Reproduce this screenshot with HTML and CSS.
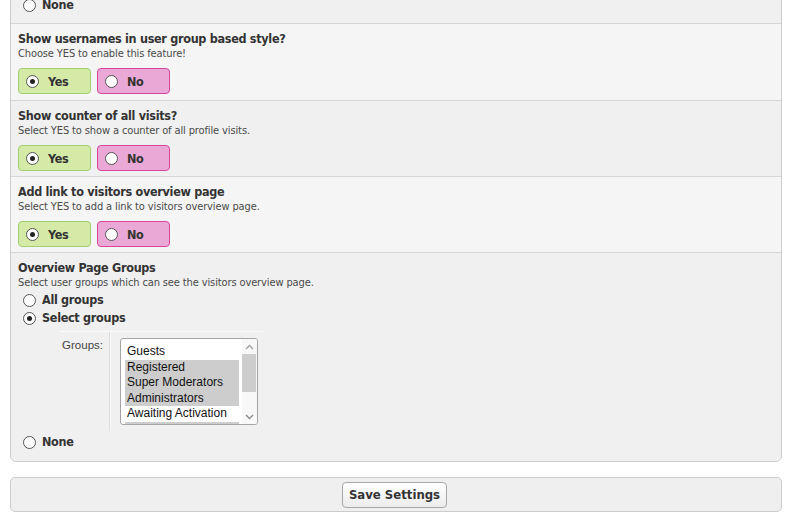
FILE: index.html
```html
<!DOCTYPE html>
<html>
<head>
<meta charset="utf-8">
<link rel="stylesheet" href="styles.css">
</head>
<body>
<div class="page">
  <div class="panel">
    <div class="row row-dark first">
      <label class="opt"><span class="radio"></span><span class="opt-text">None</span></label>
    </div>
    <div class="row row-light tall">
      <div class="title">Show usernames in user group based style?</div>
      <div class="desc">Choose YES to enable this feature!</div>
      <div class="yesno">
        <span class="yn yes"><span class="radio checked"></span>Yes</span>
        <span class="yn no"><span class="radio"></span>No</span>
      </div>
    </div>
    <div class="row row-dark">
      <div class="title">Show counter of all visits?</div>
      <div class="desc">Select YES to show a counter of all profile visits.</div>
      <div class="yesno">
        <span class="yn yes"><span class="radio checked"></span>Yes</span>
        <span class="yn no"><span class="radio"></span>No</span>
      </div>
    </div>
    <div class="row row-light">
      <div class="title">Add link to visitors overview page</div>
      <div class="desc">Select YES to add a link to visitors overview page.</div>
      <div class="yesno">
        <span class="yn yes"><span class="radio checked"></span>Yes</span>
        <span class="yn no"><span class="radio"></span>No</span>
      </div>
    </div>
    <div class="row row-dark last">
      <div class="title">Overview Page Groups</div>
      <div class="desc">Select user groups which can see the visitors overview page.</div>
      <div class="options">
        <label class="opt"><span class="radio"></span><span class="opt-text">All groups</span></label>
        <label class="opt"><span class="radio checked"></span><span class="opt-text">Select groups</span></label>
      </div>
      <div class="groups-box">
        <div class="groups-label">Groups:</div>
        <div class="groups-cell">
          <div class="listbox">
            <div class="items">
              <div class="item">Guests</div>
              <div class="item sel">Registered</div>
              <div class="item sel">Super Moderators</div>
              <div class="item sel">Administrators</div>
              <div class="item">Awaiting Activation</div>
              <div class="item sel">Moderators</div>
            </div>
            <div class="scrollbar">
              <div class="arrow up"><svg width="9" height="6" viewBox="0 0 9 6"><path d="M1 5 L4.5 1.5 L8 5" fill="none" stroke="#a3a3a3" stroke-width="1.4"/></svg></div>
              <div class="thumb"></div>
              <div class="track"></div>
              <div class="arrow down"><svg width="9" height="6" viewBox="0 0 9 6"><path d="M1 1 L4.5 4.5 L8 1" fill="none" stroke="#8a8a8a" stroke-width="1.4"/></svg></div>
            </div>
          </div>
        </div>
      </div>
      <div class="options none-opt">
        <label class="opt"><span class="radio"></span><span class="opt-text">None</span></label>
      </div>
    </div>
  </div>
  <div class="submit-bar">
    <button class="save">Save Settings</button>
  </div>
</div>
</body>
</html>
```

FILE: styles.css
```css
html, body {
  margin: 0;
  padding: 0;
  background: #ffffff;
}
body {
  font-family: "DejaVu Sans Condensed", "DejaVu Sans", sans-serif;
  color: #333333;
}
.page {
  padding: 0 10px;
}
.panel {
  margin-top: -13px;
  border: 1px solid #cccccc;
  border-radius: 0 0 6px 6px;
  background: #f0f0f0;
  overflow: hidden;
}
.row {
  padding: 7px 7px 5px 7px;
  border-bottom: 1px solid #d6d6d6;
}
.row.tall {
  padding-bottom: 6px;
}
.row.first {
  padding-top: 8px;
  padding-bottom: 10px;
}
.row.last {
  border-bottom: none;
  padding-bottom: 11px;
}
.row-dark { background: #f0f0f0; }
.row-light { background: #f5f5f5; }
.title {
  font-weight: bold;
  font-size: 12.5px;
  letter-spacing: -0.3px;
  line-height: 16px;
  color: #333333;
}
.desc {
  font-size: 11px;
  letter-spacing: -0.12px;
  line-height: 13px;
  color: #4a4a4a;
}
.yesno {
  display: flex;
  gap: 6px;
  margin-top: 8px;
}
.yn {
  display: flex;
  align-items: center;
  box-sizing: border-box;
  width: 73px;
  height: 26px;
  padding-left: 7px;
  border-radius: 4px;
  font-weight: bold;
  font-size: 12.5px;
  letter-spacing: -0.3px;
  color: #333333;
}
.yn .radio {
  margin-right: 9px;
}
.yes {
  background: #d6eaa8;
  border: 1px solid #9fcf6e;
}
.no {
  background: #e9a8d5;
  border: 1px solid #d6479c;
}
.radio {
  display: inline-block;
  box-sizing: border-box;
  width: 13px;
  height: 13px;
  border: 1px solid #555555;
  border-radius: 50%;
  background: #ffffff;
  position: relative;
  flex: none;
}
.radio.checked::after {
  content: "";
  position: absolute;
  left: 3px;
  top: 3px;
  width: 5px;
  height: 5px;
  border-radius: 50%;
  background: #222222;
}
.opt {
  display: flex;
  align-items: center;
  height: 17px;
  padding-left: 5px;
}
.opt .radio {
  margin-right: 6px;
  margin-top: 2px;
}
.opt-text {
  font-weight: bold;
  font-size: 12.5px;
  letter-spacing: -0.3px;
  color: #333333;
}
.options {
  margin-top: 2px;
}
.options .opt + .opt {
  margin-top: 1px;
}
.none-opt {
  margin-top: 2px;
}
.groups-box {
  display: flex;
  margin-top: 5px;
  margin-left: 42px;
  width: 203px;
  border-top: 1px solid #fafafa;
}
.groups-label {
  box-sizing: border-box;
  width: 50px;
  padding: 7px 6px 0 0;
  text-align: right;
  font-family: "Liberation Sans", Arial, sans-serif;
  font-size: 11.5px;
  color: #444444;
  border-right: 1px solid #dddddd;
}
.groups-cell {
  padding: 6px 5px 6px 9px;
  border-left: 1px solid #f8f8f8;
}
.listbox {
  box-sizing: border-box;
  width: 138px;
  height: 87px;
  border: 1px solid #a5a5a5;
  border-radius: 3px;
  background: #ffffff;
  display: flex;
  overflow: hidden;
}
.items {
  flex: 1;
  padding: 5px 3px 0 4px;
  font-family: "Liberation Sans", Arial, sans-serif;
  font-size: 12px;
  color: #111111;
  overflow: hidden;
}
.item {
  height: 15.5px;
  line-height: 15.5px;
  padding-left: 2px;
  white-space: nowrap;
}
.item.sel {
  background: #cdcdcd;
}
.scrollbar {
  width: 15px;
  display: flex;
  flex-direction: column;
  background: #f8f8f8;
}
.arrow {
  height: 15px;
  display: flex;
  align-items: center;
  justify-content: center;
}
.thumb {
  height: 38px;
  background: #cdcdcd;
  margin: 0 1px 0 0;
}
.track {
  flex: 1;
}
.submit-bar {
  margin-top: 15px;
  box-sizing: border-box;
  height: 35px;
  border: 1px solid #cccccc;
  border-radius: 5px;
  background: #efefef;
  display: flex;
  justify-content: center;
  align-items: center;
}
.save {
  box-sizing: border-box;
  width: 105px;
  height: 26px;
  margin-right: 3px;
  border: 1px solid #a8a8a8;
  border-radius: 4px;
  background: linear-gradient(#ffffff, #ececec);
  font-family: "DejaVu Sans Condensed", "DejaVu Sans", sans-serif;
  font-weight: bold;
  font-size: 13px;
  color: #333333;
  padding: 0;
}
```
